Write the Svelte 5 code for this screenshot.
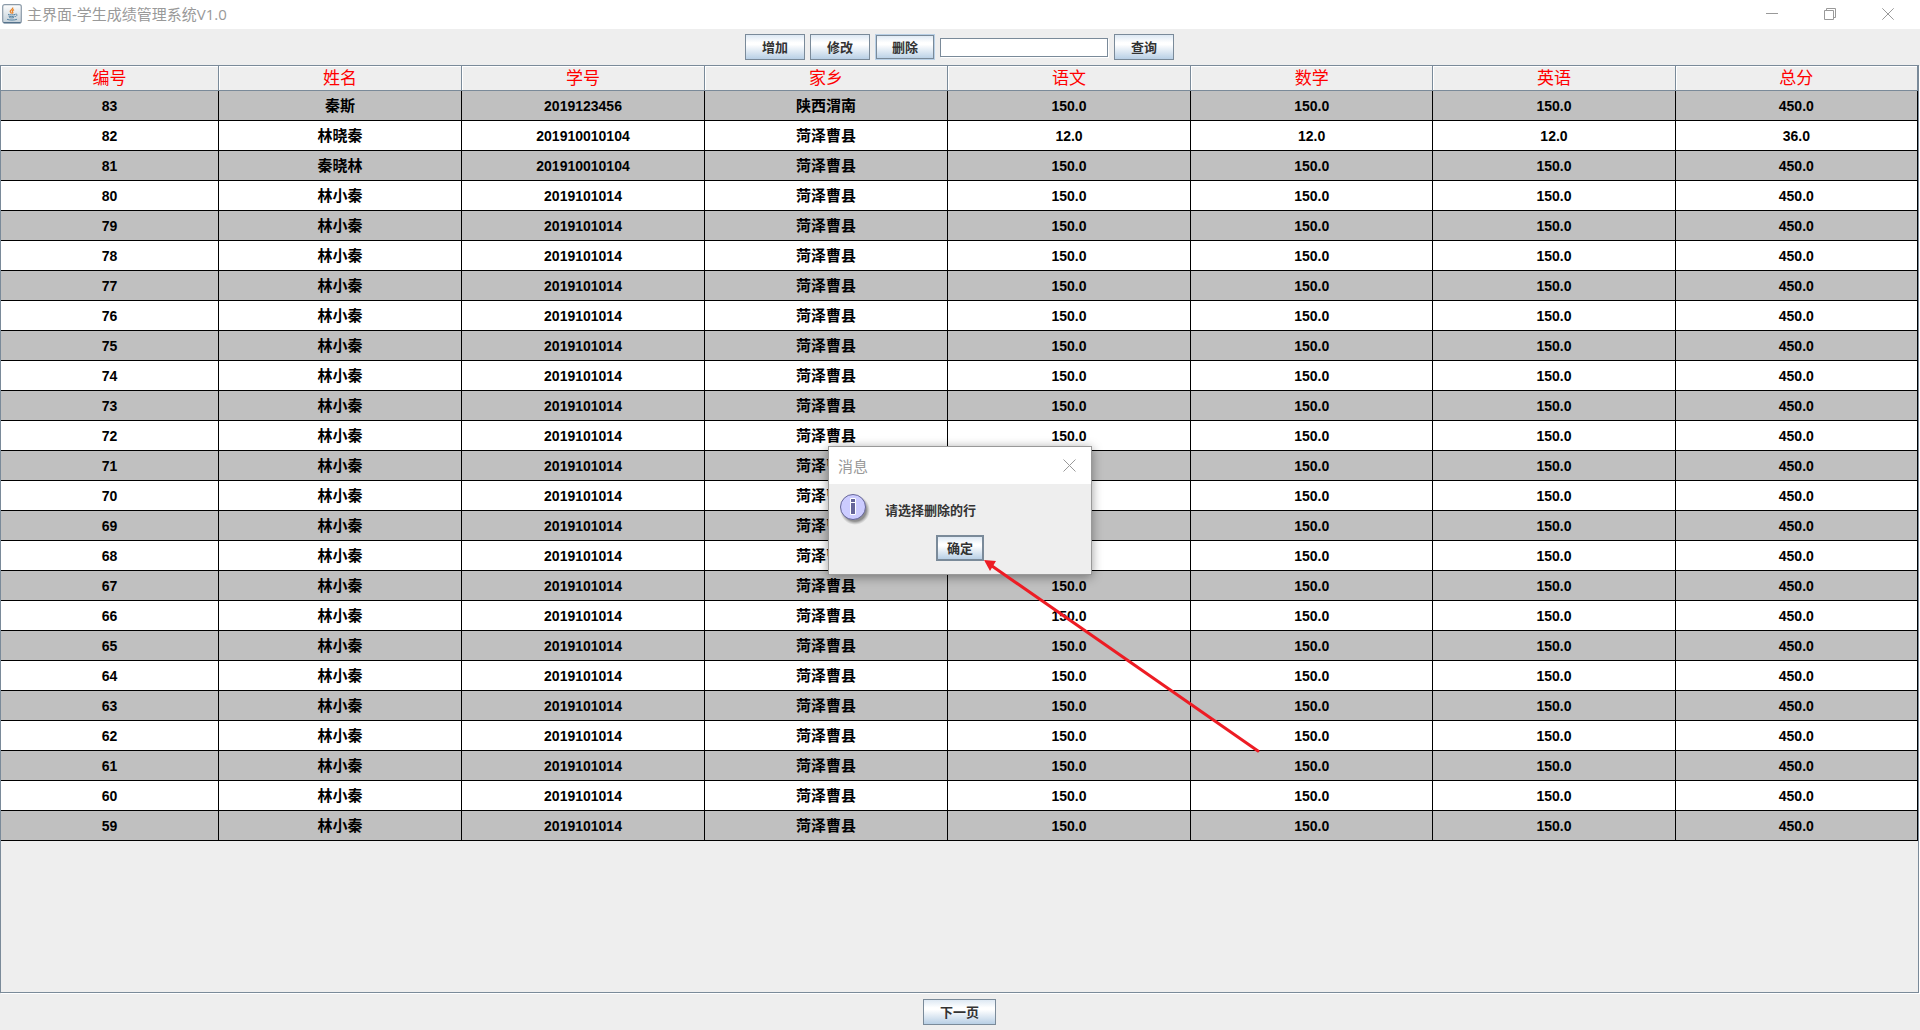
<script>
  const columns = ['编号', '姓名', '学号', '家乡', '语文', '数学', '英语', '总分'];

  const special = [
    ['83', '秦斯', '2019123456', '陕西渭南', '150.0', '150.0', '150.0', '450.0'],
    ['82', '林晓秦', '201910010104', '菏泽曹县', '12.0', '12.0', '12.0', '36.0'],
    ['81', '秦晓林', '201910010104', '菏泽曹县', '150.0', '150.0', '150.0', '450.0']
  ];
  const rest = Array.from({ length: 22 }, (_, i) => [
    String(80 - i), '林小秦', '2019101014', '菏泽曹县', '150.0', '150.0', '150.0', '450.0'
  ]);
  const rows = [...special, ...rest];

  let keyword = $state('');
</script>

<div class="window">
  <header class="titlebar">
    <svg class="logo" width="20" height="20" viewBox="0 0 20 20" aria-hidden="true">
      <defs>
        <linearGradient id="tile" x1="0" y1="0" x2="0" y2="1">
          <stop offset="0" stop-color="#fdfdfd" />
          <stop offset="1" stop-color="#c3cfd8" />
        </linearGradient>
      </defs>
      <rect x="0.7" y="0.7" width="18.6" height="18.2" rx="2" fill="url(#tile)" stroke="#8b9aa8" stroke-width="1.2" />
      <path d="M1.5 18.700h17" stroke="#4c6d88" stroke-width="1.2" />
      <path d="M10.6 3.500c1.2 1.800-2.700 2.400-2.400 4 .2 1 1.300 1.300 1.500 2.200M12 5.600c-1.400.8-2 1.400-1.400 2.200.5.7.3 1.200-.2 1.700" fill="none" stroke="#e8832a" stroke-width="1.300" />
      <path d="M6 10.300c1.500.8 5.400.8 7.300 0M6.500 12c1.800.8 4.700.7 6.200.1M7.200 13.500c1.500.5 3.500.5 4.800 0M5 15.300c2.500 1 7.500 1 10 0M13.500 10.200c2.100-.5 2 1.700-.3 2.500" fill="none" stroke="#5a86a5" stroke-width="1" />
    </svg>
    <h1>主界面-学生成绩管理系统V1.0</h1>
    <div class="controls">
      <button aria-label="最小化">
        <svg width="12" height="12" viewBox="0 0 12 12"><path d="M0 5.500h12" /></svg>
      </button>
      <button aria-label="还原">
        <svg width="12" height="12" viewBox="0 0 12 12"><path d="M.5 2.500h9v9h-9zM2.500 2.500v-2h9v9h-2" /></svg>
      </button>
      <button aria-label="关闭">
        <svg width="12" height="12" viewBox="0 0 12 12"><path d="M.3.3l11.400 11.400M11.700.3L.3 11.700" /></svg>
      </button>
    </div>
  </header>

  <div class="toolbar">
    <button class="metal">增加</button>
    <button class="metal">修改</button>
    <button class="metal focused">删除</button>
    <input type="text" aria-label="查询关键字" bind:value={keyword} />
    <button class="metal">查询</button>
  </div>

  <main>
    <table>
      <colgroup>
        <col class="first" />
        <col class="wide" span="4" />
        <col span="3" />
      </colgroup>
      <thead>
        <tr>
          {#each columns as name (name)}<th scope="col">{name}</th>{/each}
        </tr>
      </thead>
      <tbody>
        {#each rows as row (row[0])}
          <tr>
            {#each row as value, i}
              <td class:han={i === 1 || i === 3}>{value}</td>
            {/each}
          </tr>
        {/each}
      </tbody>
    </table>
  </main>

  <footer>
    <button class="metal next">下一页</button>
  </footer>

  <div class="dialog" role="dialog" aria-labelledby="dialog-title">
    <div class="dialog-title">
      <h2 id="dialog-title">消息</h2>
      <button aria-label="关闭消息">
        <svg width="13" height="13" viewBox="0 0 13 13"><path d="M.5.5l12 12M12.500.5l-12 12" /></svg>
      </button>
    </div>
    <div class="dialog-body">
      <div class="message">
        <svg class="info" width="32" height="32" viewBox="0 0 32 32" aria-hidden="true">
          <defs>
            <radialGradient id="shade">
              <stop offset="0.75" stop-color="#777" stop-opacity="0.8" />
              <stop offset="1" stop-color="#999" stop-opacity="0" />
            </radialGradient>
          </defs>
          <circle cx="16" cy="17" r="15" fill="url(#shade)" />
          <circle cx="14" cy="14" r="12.500" fill="#ccccff" stroke="#666699" />
          <path d="M11.500 5.500h5v4h-5zM11.500 9.500h5v12h-5z" fill="#666699" stroke="#fff" />
        </svg>
        <p>请选择删除的行</p>
      </div>
      <button class="metal confirm">确定</button>
    </div>
    <svg class="arrow" width="280" height="196" viewBox="0 0 280 196" aria-hidden="true">
      <path d="M8 6L274 191" stroke="#ed1c24" stroke-width="3" stroke-linecap="round" />
      <path d="M0 0L12 1L9 6L6 11Z" fill="#ed1c24" />
    </svg>
  </div>
</div>

<style>
  :global(body) {
    margin: 0;
    background: #eeeeee;
  }

  .window {
    position: relative;
    display: flex;
    flex-direction: column;
    min-height: 100vh;
    overflow: hidden;
    background: #eeeeee;
    font-family: 'Liberation Sans', 'Noto Sans CJK SC', sans-serif;
  }

  button {
    margin: 0;
    padding: 0;
    font-family: inherit;
  }

  h1,
  h2 {
    margin: 0;
    color: #999999;
    font: 400 15px/20px 'Open Sans', 'Noto Sans CJK SC', sans-serif;
  }

  .titlebar {
    display: flex;
    align-items: center;
    box-sizing: border-box;
    height: 29px;
    padding: 0 3px 2px 2px;
    background: #ffffff;
  }

  .logo {
    margin-right: 5px;
  }

  .controls {
    display: flex;
    margin-left: auto;
  }

  .controls button,
  .dialog-title button {
    display: grid;
    place-items: center;
    width: 58px;
    height: 27px;
    border: 0;
    background: none;
  }

  .controls svg,
  .dialog-title svg {
    fill: none;
    stroke: #999999;
  }

  .toolbar {
    display: flex;
    align-items: center;
    justify-content: center;
    gap: 5px;
    height: 36px;
    padding-right: 1px;
  }

  .metal {
    box-sizing: border-box;
    width: 60px;
    height: 26px;
    padding-top: 2px;
    border: 1px solid #7a8a99;
    background: linear-gradient(#dde8f3, #ffffff 32%, #ffffff 40%, #b8cfe5);
    color: #333333;
    font-size: 13px;
    font-weight: 700;
    line-height: 18px;
  }

  .focused {
    border-color: #b8cfe5;
    box-shadow: inset 0 0 0 1px #7a8a99;
  }

  input {
    box-sizing: border-box;
    width: 168px;
    height: 19px;
    margin-right: 1px;
    padding: 0 2px;
    border: 1px solid #7a8a99;
    border-radius: 0;
    outline: 0;
    background: #ffffff;
    box-shadow: 1px 1px #ffffff;
    font: 13px 'Liberation Sans', 'Noto Sans CJK SC', sans-serif;
  }

  main {
    flex: 1;
    margin-right: 1px;
    border: 1px solid #7a8a99;
    box-shadow: 1px 1px #ffffff;
  }

  table {
    width: 100%;
    border-collapse: separate;
    border-spacing: 0;
    table-layout: fixed;
  }

  .first {
    width: 218px;
  }

  .wide {
    width: 243px;
  }

  th,
  td {
    box-sizing: border-box;
    padding: 0;
    text-align: center;
  }

  th {
    height: 25px;
    padding-top: 2px;
    border-right: 1px solid #7a8a99;
    border-bottom: 1px solid #7a8a99;
    box-shadow: inset 1px 1px #ffffff;
    color: #ff0000;
    font-size: 17px;
    font-weight: 400;
    line-height: 22px;
  }

  td {
    height: 30px;
    border-right: 1px solid #000000;
    border-bottom: 1px solid #000000;
    background: #ffffff;
    color: #000000;
    font-size: 14px;
    font-weight: 700;
    line-height: 24px;
  }

  .han {
    font-size: 15px;
  }

  tbody tr:nth-child(odd) td {
    background: #c0c0c0;
  }

  footer {
    display: flex;
    align-items: center;
    justify-content: center;
    height: 36px;
    padding: 1px 1px 0 0;
  }

  .next {
    width: 73px;
  }

  .dialog {
    position: absolute;
    top: 446px;
    left: calc(50% - 132px);
    box-sizing: border-box;
    width: 264px;
    border: 1px solid #999999;
    background: #eeeeee;
    box-shadow: 0 2px 10px rgba(0, 0, 0, 0.4);
  }

  .dialog-title {
    display: flex;
    align-items: center;
    justify-content: space-between;
    height: 37px;
    padding-left: 9px;
    background: #ffffff;
  }

  .dialog-title button {
    width: 43px;
  }

  .dialog-body {
    display: flex;
    flex-direction: column;
    align-items: center;
    padding: 9px 10px 13px;
  }

  .message {
    display: flex;
    align-items: center;
    gap: 14px;
    width: 100%;
    margin-bottom: 10px;
  }

  .message p {
    margin: 0;
    padding-top: 4px;
    color: #333333;
    font-size: 13px;
    font-weight: 700;
    line-height: 20px;
  }

  .confirm {
    width: 48px;
    border-width: 2px;
  }

  .arrow {
    position: absolute;
    top: 113px;
    left: 155px;
    pointer-events: none;
  }
</style>
